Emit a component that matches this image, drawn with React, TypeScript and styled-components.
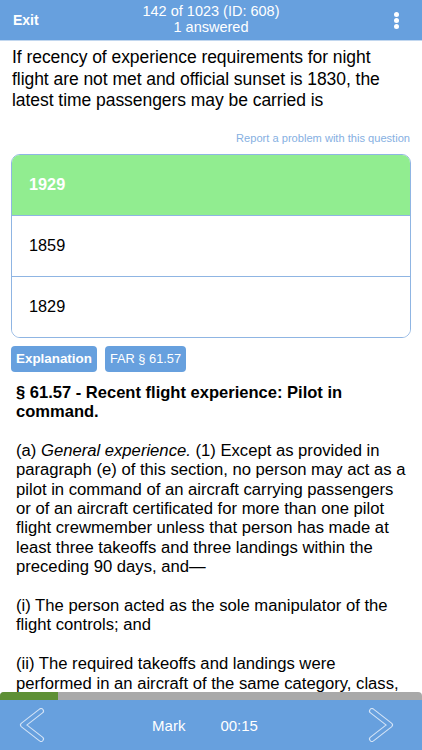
import React from 'react';
import styled, { createGlobalStyle } from 'styled-components';

const GlobalStyle = createGlobalStyle`
  html, body {
    margin: 0;
    padding: 0;
    background: #fff;
  }
  body {
    font-family: "Liberation Sans", Arial, sans-serif;
    color: #000;
  }
`;

const BLUE = '#67a0de';
const LINE = '#8fb5e3';

const Screen = styled.div`
  width: 422px;
  height: 750px;
  display: flex;
  flex-direction: column;
  overflow: hidden;
`;

const TopBar = styled.header`
  height: 40px;
  flex: none;
  background: ${BLUE};
  border-bottom: 1px solid #c2d7ef;
  display: grid;
  grid-template-columns: 80px 1fr 80px;
  align-items: center;
  color: #fff;
`;

const ExitButton = styled.span`
  font-weight: bold;
  font-size: 14px;
  padding-left: 13px;
`;

const Title = styled.div`
  text-align: center;
  font-size: 14.5px;
  line-height: 15.5px;
  padding-bottom: 1px;
`;

const MenuDots = styled.div`
  justify-self: end;
  margin-right: 23px;
  display: flex;
  flex-direction: column;
  gap: 1px;

  span {
    width: 5px;
    height: 5px;
    border-radius: 50%;
    background: #fff;
  }
`;

const Content = styled.main`
  flex: 1;
  overflow: hidden;
`;

const Question = styled.p`
  margin: 0;
  padding: 6px 12px 0;
  font-size: 17.5px;
  line-height: 21.5px;
  letter-spacing: -0.05px;
`;

const ReportLink = styled.div`
  text-align: right;
  padding: 20px 12px 0 0;
  font-size: 11.1px;
  line-height: 13px;
  color: #86b0e2;
`;

const Answers = styled.div`
  margin: 9px 11px 0;
  border: 1px solid ${LINE};
  border-radius: 9px;
  overflow: hidden;
`;

const Answer = styled.div<{ $correct?: boolean }>`
  height: 60px;
  display: flex;
  align-items: center;
  padding-left: 17px;
  font-size: 16.3px;
  background: ${(p) => (p.$correct ? '#91ed90' : '#fff')};
  color: ${(p) => (p.$correct ? '#fff' : '#000')};
  font-weight: ${(p) => (p.$correct ? 'bold' : 'normal')};

  & + & {
    border-top: 1px solid ${LINE};
  }
`;

const Tags = styled.div`
  display: flex;
  gap: 8px;
  padding: 8px 11px 0;
`;

const Tag = styled.span<{ $active?: boolean }>`
  background: ${BLUE};
  color: #fff;
  font-size: ${(p) => (p.$active ? '13.4px' : '12.8px')};
  font-weight: ${(p) => (p.$active ? 'bold' : 'normal')};
  padding: 0 5px;
  height: 26px;
  line-height: 26px;
  border-radius: 4px;
`;

const Explanation = styled.div`
  padding: 11px 16px 0 16px;
  font-size: 16.65px;
  line-height: 19.4px;

  h2 {
    margin: 0;
    font-size: 16.55px;
    line-height: 19.4px;
    font-weight: bold;
  }

  p {
    margin: 19.4px 0 0;
  }
`;

const Progress = styled.div`
  height: 8px;
  flex: none;
  background: #a9a9a9;
  border-radius: 4px 4px 0 0;
  overflow: hidden;
`;

const ProgressFill = styled.div`
  height: 100%;
  background: #5e9035;
`;

const BottomBar = styled.footer`
  height: 50px;
  flex: none;
  background: ${BLUE};
  display: flex;
  align-items: center;
  justify-content: space-between;
  padding: 0 28px 0 19px;
  color: #fff;
`;

const Center = styled.div`
  display: flex;
  gap: 35px;
  font-size: 15px;
  margin-right: 3px;
`;

const Chevron = ({ dir }: { dir: 'left' | 'right' }) => {
  const d = dir === 'left' ? 'M22 3 L4 17 L22 31' : 'M4 3 L22 17 L4 31';
  return (
    <svg width="26" height="34" viewBox="0 0 26 34">
      <path d={d} fill="none" stroke="#d3e3f6" strokeWidth="6" strokeLinecap="round" strokeLinejoin="round" />
      <path d={d} fill="none" stroke={BLUE} strokeWidth="3.8" strokeLinecap="round" strokeLinejoin="round" />
    </svg>
  );
};

export default function App() {
  const progress = 58 / 422;
  return (
    <>
      <GlobalStyle />
      <Screen>
        <TopBar>
          <ExitButton>Exit</ExitButton>
          <Title>
            <div>142 of 1023 (ID: 608)</div>
            <div>1 answered</div>
          </Title>
          <MenuDots>
            <span />
            <span />
            <span />
          </MenuDots>
        </TopBar>
        <Content>
          <Question>
            If recency of experience requirements for night flight are not met and official sunset is 1830, the
            latest time passengers may be carried is
          </Question>
          <ReportLink>Report a problem with this question</ReportLink>
          <Answers>
            <Answer $correct>1929</Answer>
            <Answer>1859</Answer>
            <Answer>1829</Answer>
          </Answers>
          <Tags>
            <Tag $active>Explanation</Tag>
            <Tag>FAR § 61.57</Tag>
          </Tags>
          <Explanation>
            <h2>§ 61.57 - Recent flight experience: Pilot in command.</h2>
            <p>
              (a) <i>General experience.</i> (1) Except as provided in paragraph (e) of this section, no person may
              act as a pilot in command of an aircraft carrying passengers or of an aircraft certificated for more
              than one pilot flight crewmember unless that person has made at least three takeoffs and three landings
              within the preceding 90 days, and—
            </p>
            <p>(i) The person acted as the sole manipulator of the flight controls; and</p>
            <p>
              (ii) The required takeoffs and landings were performed in an aircraft of the same category, class, and
              type (if a type rating is required), and, if the aircraft to be flown is an airplane with a tailwheel,
              the takeoffs and landings must have been made to a full stop in an airplane with a tailwheel.
            </p>
          </Explanation>
        </Content>
        <Progress>
          <ProgressFill style={{ width: `${progress * 100}%` }} />
        </Progress>
        <BottomBar>
          <Chevron dir="left" />
          <Center>
            <span>Mark</span>
            <span>00:15</span>
          </Center>
          <Chevron dir="right" />
        </BottomBar>
      </Screen>
    </>
  );
}
